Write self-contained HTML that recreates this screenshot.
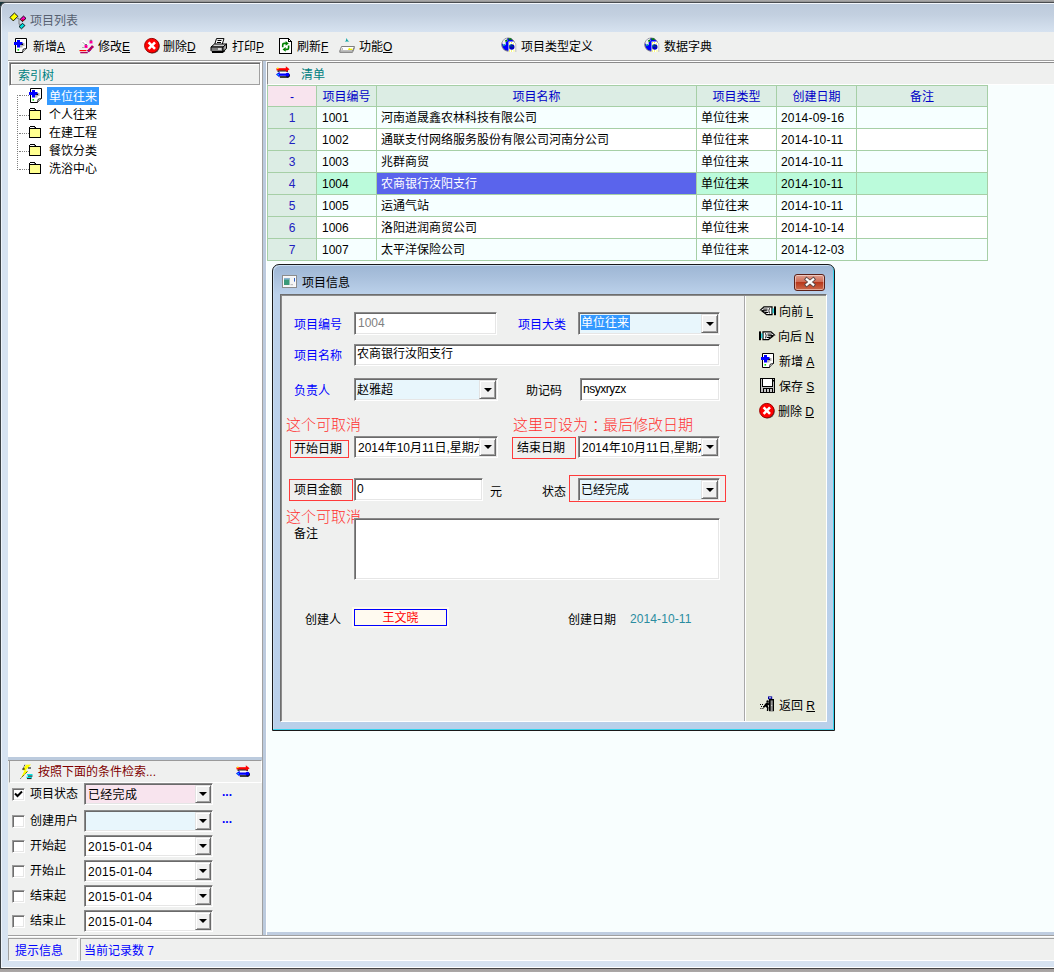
<!DOCTYPE html>
<html lang="zh-CN">
<head>
<meta charset="utf-8">
<title>项目列表</title>
<style>
*{box-sizing:border-box;margin:0;padding:0}
html,body{width:1054px;height:972px;overflow:hidden}
body{position:relative;background:#8d8d8d;font-family:"Liberation Sans","Noto Sans CJK SC","WenQuanYi Zen Hei",sans-serif;font-size:12px;line-height:14px;color:#000}
.a{position:absolute;white-space:nowrap}
svg{position:absolute;overflow:visible}
#topstrip{left:0;top:0;width:1054px;height:6px;background:linear-gradient(#adadad 0,#8e8e8e 2px,#17343a 2px,#17343a 6px)}
#botstrip{left:0;top:968px;width:1054px;height:4px;background:linear-gradient(#444 0,#444 1px,#a39f9e 1px,#aca8a7 100%)}
#win{left:0;top:2px;width:1070px;height:966px;border-left:1px solid #3d4246;border-top:1px solid #484b4e;border-radius:6px 0 0 0;background:linear-gradient(#f2f6fb 0,#f2f6fb 1px,#bccadb 1px,#c3d0e0 12px,#d3dfed 26px,#d7e3f1 30px,#d7e3f1 964px,#fff 964px);box-shadow:inset 1px 0 0 #eef4fb}
#client{left:8px;top:32px;width:1046px;height:929px;background:#eff0ef}
.tb{top:40px;height:14px}
.sunk{border:1px solid;border-color:#868686 #fff #fff #868686;box-shadow:inset 1px 1px 0 #646464}
.inp{background:#fff;border:1px solid;border-color:#8a8a8a #fff #fff #8a8a8a;box-shadow:inset 1px 1px 0 #6a6a6a, inset -1px -1px 0 #e6e6e6}
.ddb{background:#f0f0f0;border:1px solid;border-color:#e3e3e3 #696969 #696969 #e3e3e3;box-shadow:inset 1px 1px 0 #fff, inset -1px -1px 0 #a0a0a0}
.ddb:after{content:"";position:absolute;left:50%;top:50%;margin:-2px 0 0 -4px;border:4px solid transparent;border-top-color:#000;border-bottom:0;width:0;height:0}
.teal{color:#008080}
.blue{color:#0000ff}
.red{color:#ff3b3b}
.ann{font-size:15px;line-height:18px;color:#ff3030;font-weight:300}
.cb{width:13px;height:13px;background:#fff;border:1px solid;border-color:#9a9a9a #fff #fff #9a9a9a;box-shadow:inset 1px 1px 0 #6e6e6e, inset -1px -1px 0 #e6e6e6}
.g{border-collapse:collapse}
.cell{border-right:1px solid #a6cfa6;border-bottom:1px solid #a6cfa6;height:22px;line-height:21px;overflow:hidden}
.hd{background:#dcede4;color:#0000c8;text-align:center}
.rn{background:#dcede4;color:#2020c0;text-align:center}
.rbox{border:1px solid #ff3b3b;padding-left:4px}
</style>
</head>
<body>
<div class="a" id="topstrip"></div>
<div class="a" id="botstrip"></div>
<div class="a" id="win"></div>
<div class="a" style="left:30px;top:14px;color:#566070">项目列表</div>
<div class="a" id="client"></div>
<!-- toolbar -->
<div class="a tb" style="left:33px">新增<u>A</u></div>
<div class="a tb" style="left:98px">修改<u>E</u></div>
<div class="a tb" style="left:163px">删除<u>D</u></div>
<div class="a tb" style="left:232px">打印<u>P</u></div>
<div class="a tb" style="left:297px">刷新<u>F</u></div>
<div class="a tb" style="left:359px">功能<u>O</u></div>
<svg style="left:14px;top:38px" width="14" height="15" viewBox="0 0 14 15" ><path d="M1.5 .5H12.5V10.5L8.5 14.5H1.5Z" fill="#fff" stroke="#000"/><path d="M8.5 14.5L9.2 11.2L12.5 10.5" fill="#fff" stroke="#000" stroke-width=".9"/><path d="M6 5H10.5V8H8.5V9.5H6Z" fill="#b4b4b4"/><path d="M3 2H6V4H8.5V7H6V9.5H3V7H0V4H3Z" fill="#0000ff"/><rect x="7.5" y="5.8" width="1.5" height="1.2" fill="#000"/><rect x="3.5" y="11" width="1.6" height="1.6" fill="#00e000"/></svg>
<svg style="left:79px;top:39px" width="15" height="15" viewBox="0 0 15 15" ><path d="M2 3L4.5 .8L9 5.5L6.5 7.5Z" fill="#fff"/><path d="M3.5 3L7 6.5" stroke="#a0a0a0" stroke-width="1"/><rect x="5.5" y="6" width="3" height="3" fill="#ff00c0"/><rect x="6" y="5" width="2" height="1" fill="#707070"/><rect x="6.5" y="7" width="1" height="1" fill="#ff0000"/><rect x="10.5" y="1.5" width="3" height="3" fill="#ff00c0"/><rect x="11" y=".8" width="2" height="1" fill="#707070"/><rect x="11.5" y="2.5" width="1" height="1" fill="#ff0000"/><path d="M3 8.5H6" stroke="#b0b0b0" stroke-width="1"/><rect x=".5" y="11" width="7" height="1.2" fill="#ff0000"/><path d="M1.5 13.6H8.5" stroke="#ff0000" stroke-width="1.2"/><path d="M1.5 13.6H8.5" stroke="#6000c0" stroke-width="1.2" stroke-dasharray="1 1"/><path d="M9 12.5L14 7" stroke="#ff0000" stroke-width="2.6"/><path d="M9 12.5L14 7" stroke="#6000c0" stroke-width="2.6" stroke-dasharray="1 1"/></svg>
<svg style="left:144px;top:38px" width="16" height="16" viewBox="0 0 16 16" ><circle cx="8.5" cy="8.4" r="7.2" fill="#505050"/><circle cx="7.8" cy="7.6" r="7.2" fill="#ff0000" stroke="#a00000" stroke-width="1"/><path d="M4.6 4.4L11 10.8M11 4.4L4.6 10.8" stroke="#fff" stroke-width="2.6"/></svg>
<svg style="left:210px;top:38px" width="18" height="16" viewBox="0 0 18 16" ><path d="M4.5 7L6.5 .6H14L12 7Z" fill="#fff" stroke="#000"/><path d="M7.5 2.5H11.5M7 4.5H11" stroke="#000" stroke-width="1"/><path d="M1 9L4.5 6H16.5L13 9Z" fill="#d0d0d0" stroke="#000"/><path d="M1 9H13V13.5H2L1 12.5Z" fill="#808080" stroke="#000"/><path d="M13 9L16.5 6V10.5L13 13.5Z" fill="#a0a0a0" stroke="#000"/><path d="M8 11H11.5" stroke="#fff" stroke-width="1.4"/><path d="M2 14.5H12.5L15 12.5" fill="none" stroke="#000" stroke-width="1.2"/></svg>
<svg style="left:279px;top:38px" width="13" height="16" viewBox="0 0 13 16" ><path d="M.5 .5H9.5L12.5 3.5V15.5H.5Z" fill="#fff" stroke="#000" shape-rendering="crispEdges"/><path d="M9.5 .5V3.5H12.5" fill="none" stroke="#000" shape-rendering="crispEdges"/><path d="M3.7 9.2V6.8Q3.7 5.4 5.2 5.4H7" fill="none" stroke="#008000" stroke-width="1.6"/><path d="M6.6 3L9.8 5.4L6.6 7.8Z" fill="#008000"/><path d="M9.6 7.6V10Q9.6 11.4 8.1 11.4H6.3" fill="none" stroke="#008000" stroke-width="1.6"/><path d="M6.7 9L3.5 11.4L6.7 13.8Z" fill="#008000"/></svg>
<svg style="left:339px;top:38px" width="16" height="15" viewBox="0 0 16 15" ><path d="M7.5 0L8.8 2.4L10.4 3.6H5.8L7 2.4Z" fill="#00a0a0"/><path d="M2.5 8.5H15.5L13.5 13H.8Z" fill="#fff" stroke="#808080" stroke-width="1"/><path d="M.8 13V14.4H13.5L15.5 9.5" fill="none" stroke="#808080" stroke-width="1"/><path d="M9 12L10 9.8L11.5 10.8L13.5 10.5L13 12Z" fill="#f0f000"/><path d="M3.5 10.2L3 12" stroke="#a0a0a0"/></svg>
<svg style="left:501px;top:37px" width="16" height="16" viewBox="0 0 16 16" ><circle cx="7.3" cy="7.6" r="6.6" fill="#0000ff" stroke="#808080" stroke-width="1"/><path d="M1.2 6Q2 2.5 6 1.3L6.5 4L4.5 5.5L5 7.5L2.5 8.5Z" fill="#f0f0f0"/><path d="M4 3.2L6 2.6L6.2 4.4L4.6 5Z" fill="#008000"/><path d="M7 1.5L10 1.2L11 2.6L8 3.2Z" fill="#008000"/><path d="M2 7.5L4 7L4.5 8.5L2.5 9.2Z" fill="#00a0a0"/><path d="M7.5 4.5H12.5L14.8 6.8V15H7.5Z" fill="#fff"/><path d="M12.5 4.5L14.8 6.8V15" fill="none" stroke="#b0b0b0" stroke-width=".8"/><g fill="#f0f000"><rect x="8" y="5.2" width="1" height="1"/><rect x="10" y="5.2" width="1" height="1"/><rect x="8" y="13.5" width="1" height="1"/><rect x="10" y="13.5" width="1" height="1"/><rect x="12.5" y="13.5" width="1" height="1"/><rect x="8" y="7.5" width="1" height="1"/><rect x="8" y="11.5" width="1" height="1"/><rect x="12" y="6.5" width="1" height="1"/></g><circle cx="10.8" cy="10" r="2.7" fill="#0000c0"/><path d="M8.6 10A2.3 2.3 0 0 1 11 7.6" fill="none" stroke="#008080" stroke-width="1"/><path d="M10.5 9L12 9.3L11 10.3Z" fill="#00a000"/></svg>
<svg style="left:644px;top:37px" width="16" height="16" viewBox="0 0 16 16" ><circle cx="7.3" cy="7.6" r="6.6" fill="#0000ff" stroke="#808080" stroke-width="1"/><path d="M1.2 6Q2 2.5 6 1.3L6.5 4L4.5 5.5L5 7.5L2.5 8.5Z" fill="#f0f0f0"/><path d="M4 3.2L6 2.6L6.2 4.4L4.6 5Z" fill="#008000"/><path d="M7 1.5L10 1.2L11 2.6L8 3.2Z" fill="#008000"/><path d="M2 7.5L4 7L4.5 8.5L2.5 9.2Z" fill="#00a0a0"/><path d="M7.5 4.5H12.5L14.8 6.8V15H7.5Z" fill="#fff"/><path d="M12.5 4.5L14.8 6.8V15" fill="none" stroke="#b0b0b0" stroke-width=".8"/><g fill="#f0f000"><rect x="8" y="5.2" width="1" height="1"/><rect x="10" y="5.2" width="1" height="1"/><rect x="8" y="13.5" width="1" height="1"/><rect x="10" y="13.5" width="1" height="1"/><rect x="12.5" y="13.5" width="1" height="1"/><rect x="8" y="7.5" width="1" height="1"/><rect x="8" y="11.5" width="1" height="1"/><rect x="12" y="6.5" width="1" height="1"/></g><circle cx="10.8" cy="10" r="2.7" fill="#0000c0"/><path d="M8.6 10A2.3 2.3 0 0 1 11 7.6" fill="none" stroke="#008080" stroke-width="1"/><path d="M10.5 9L12 9.3L11 10.3Z" fill="#00a000"/></svg>
<svg style="left:9px;top:12px" width="18" height="18" viewBox="0 0 18 18" ><path d="M8 6.3H10V12.3H11.5" fill="none" stroke="#808080" stroke-width="1"/><path d="M5.4 1L8.9 4.3L4.3 8.9L.9 5.4Z" fill="#ffff00" stroke="#000" stroke-width=".9"/><path d="M14.5 4.1L17 6.4L13.4 9.6L11.1 7.3Z" fill="#ff00c0" stroke="#000" stroke-width=".9"/><path d="M13.9 7L15.2 8.2L13.8 9.3L12.7 8.2Z" fill="#c00000"/><path d="M13.6 11.3L15.9 13.6L12.5 16.8L10 14.5Z" fill="#00e0e0" stroke="#000" stroke-width=".9"/></svg>
<div class="a tb" style="left:521px">项目类型定义</div>
<div class="a tb" style="left:664px">数据字典</div>
<div class="a" style="left:8px;top:60px;width:1046px;height:1px;background:#a0a0a0"></div>
<div class="a" style="left:8px;top:61px;width:1046px;height:1px;background:#fff"></div>
<!-- left panel -->
<div class="a" style="left:8px;top:62px;width:254px;height:695px;background:#fff"></div>
<div class="a" style="left:262px;top:61px;width:1px;height:875px;background:#a0a0a0"></div>
<div class="a" style="left:9px;top:62px;width:252px;height:24px;background:#eff0ef;border:1px solid;border-color:#a0a0a0 #fff #fff #a0a0a0;box-shadow:inset 1px 1px 0 #696969, inset -1px -1px 0 #a0a0a0, inset 2px 2px 0 #fff"></div>
<div class="a teal" style="left:18px;top:69px">索引树</div>
<div class="a" style="left:17px;top:95px;width:0;height:75px;border-left:1px dotted #808080"></div>
<div class="a" style="left:19px;top:95px;width:10px;height:0;border-top:1px dotted #808080"></div>
<svg style="left:29px;top:88px" width="14" height="15" viewBox="0 0 14 15" ><path d="M1.5 .5H12.5V10.5L8.5 14.5H1.5Z" fill="#fff" stroke="#000"/><path d="M8.5 14.5L9.2 11.2L12.5 10.5" fill="#fff" stroke="#000" stroke-width=".9"/><path d="M6 5H10.5V8H8.5V9.5H6Z" fill="#b4b4b4"/><path d="M3 2H6V4H8.5V7H6V9.5H3V7H0V4H3Z" fill="#0000ff"/><rect x="7.5" y="5.8" width="1.5" height="1.2" fill="#000"/><rect x="3.5" y="11" width="1.6" height="1.6" fill="#00e000"/></svg>
<div class="a" style="left:47px;top:87px;width:52px;height:18px;background:#3399ff;color:#fff;line-height:20px;padding-left:2px">单位往来</div>
<div class="a" style="left:19px;top:115px;width:10px;height:0;border-top:1px dotted #808080"></div>
<svg style="left:29px;top:108px" width="12" height="12" viewBox="0 0 12 12" ><path d="M.5 11.5V1.5L1.5 .5H5.5L6.5 2.5H11.5V11.5Z" fill="#ffff90" stroke="#000" shape-rendering="crispEdges"/><path d="M1 2.5H6" stroke="#000" shape-rendering="crispEdges"/><rect x="1" y="1" width="4.5" height="1" fill="#fff"/></svg>
<div class="a" style="left:49px;top:108px">个人往来</div>
<div class="a" style="left:19px;top:133px;width:10px;height:0;border-top:1px dotted #808080"></div>
<svg style="left:29px;top:126px" width="12" height="12" viewBox="0 0 12 12" ><path d="M.5 11.5V1.5L1.5 .5H5.5L6.5 2.5H11.5V11.5Z" fill="#ffff90" stroke="#000" shape-rendering="crispEdges"/><path d="M1 2.5H6" stroke="#000" shape-rendering="crispEdges"/><rect x="1" y="1" width="4.5" height="1" fill="#fff"/></svg>
<div class="a" style="left:49px;top:126px">在建工程</div>
<div class="a" style="left:19px;top:151px;width:10px;height:0;border-top:1px dotted #808080"></div>
<svg style="left:29px;top:144px" width="12" height="12" viewBox="0 0 12 12" ><path d="M.5 11.5V1.5L1.5 .5H5.5L6.5 2.5H11.5V11.5Z" fill="#ffff90" stroke="#000" shape-rendering="crispEdges"/><path d="M1 2.5H6" stroke="#000" shape-rendering="crispEdges"/><rect x="1" y="1" width="4.5" height="1" fill="#fff"/></svg>
<div class="a" style="left:49px;top:144px">餐饮分类</div>
<div class="a" style="left:19px;top:169px;width:10px;height:0;border-top:1px dotted #808080"></div>
<svg style="left:29px;top:162px" width="12" height="12" viewBox="0 0 12 12" ><path d="M.5 11.5V1.5L1.5 .5H5.5L6.5 2.5H11.5V11.5Z" fill="#ffff90" stroke="#000" shape-rendering="crispEdges"/><path d="M1 2.5H6" stroke="#000" shape-rendering="crispEdges"/><rect x="1" y="1" width="4.5" height="1" fill="#fff"/></svg>
<div class="a" style="left:49px;top:162px">洗浴中心</div>
<div class="a" style="left:263px;top:61px;width:3px;height:875px;background:#bccbde"></div>
<div class="a" style="left:8px;top:757px;width:254px;height:3px;background:#bccbde"></div>
<div class="a" style="left:8px;top:760px;width:254px;height:175px;background:#eff0ef;border-top:1px solid #9a9a9a"></div>
<div class="a" style="left:9px;top:760px;width:253px;height:23px;border:1px solid;border-color:#9a9a9a #fff #fff #9a9a9a"></div>
<svg style="left:20px;top:764px" width="13" height="15" viewBox="0 0 13 15" ><path d="M11 .5L5.5 6.5L8 7L.8 14.3L4.5 6.5L2.5 6.2L6 .8Z" fill="#ffff00"/><path d="M.6 14.5L8 7" stroke="#000" stroke-width=".9" stroke-dasharray="1 1"/><path d="M4.8 .8L2.6 6" stroke="#000" stroke-width=".9" stroke-dasharray="1 1"/><path d="M8 4H11M2.5 5H4.8" stroke="#000" stroke-width="1"/><rect x="7" y="10" width="5.5" height="1.6" fill="#00e8e8"/><rect x="6.5" y="12.6" width="5.5" height="1.6" fill="#00e8e8"/><path d="M8 12.1H12.5M7 14.6H11.5" stroke="#000" stroke-width=".9"/></svg>
<svg style="left:236px;top:765px" width="14" height="12" viewBox="0 0 14 12" ><path d="M1.5 5H12M4 11H12.5" stroke="#000" stroke-width="1.6"/><circle cx="12" cy="9.4" r="2" fill="#000"/><rect x=".5" y="2.2" width="10" height="2.2" fill="#ff0000"/><path d="M9.8 .2L13.6 3.3L9.8 6Z" fill="#ff0000"/><rect x="1" y="1.6" width="1.5" height="1.5" fill="#ffe000"/><rect x="3.2" y="5.6" width="7" height="1.8" fill="#fff"/><path d="M3.6 5.8L0 8.6L3.6 11.4Z" fill="#0000ff"/><rect x="3" y="7.5" width="8.5" height="2.3" fill="#0000ff"/><circle cx="11.5" cy="8.7" r="1.9" fill="#0000ff"/><rect x="1.5" y="8" width="1.4" height="1.4" fill="#00d8ff"/></svg>
<div class="a" style="left:38px;top:765px;color:#800000">按照下面的条件检索...</div>
<div class="a cb" style="left:12px;top:788px"></div>
<svg style="left:14px;top:790px" width="9" height="9" viewBox="0 0 9 9"><path d="M1 3.5 L3.5 6 L8 1.5" fill="none" stroke="#000" stroke-width="2"/></svg>
<div class="a" style="left:30px;top:787px">项目状态</div>
<div class="a inp" style="left:84px;top:783px;width:129px;height:22px;background:#f8e4ee"></div>
<div class="a" style="left:88px;top:788px;letter-spacing:.3px">已经完成</div>
<div class="a ddb" style="left:195px;top:785px;width:16px;height:18px"></div>
<div class="a" style="left:222px;top:785px;color:#0000ff;font-weight:bold">...</div>
<div class="a cb" style="left:12px;top:815px"></div>
<div class="a" style="left:30px;top:814px">创建用户</div>
<div class="a inp" style="left:84px;top:810px;width:129px;height:22px;background:#e8f6fc"></div>
<div class="a" style="left:88px;top:815px;letter-spacing:.3px"></div>
<div class="a ddb" style="left:195px;top:812px;width:16px;height:18px"></div>
<div class="a" style="left:222px;top:812px;color:#0000ff;font-weight:bold">...</div>
<div class="a cb" style="left:12px;top:840px"></div>
<div class="a" style="left:30px;top:839px">开始起</div>
<div class="a inp" style="left:84px;top:835px;width:129px;height:22px;background:#fff"></div>
<div class="a" style="left:88px;top:840px;letter-spacing:.3px">2015-01-04</div>
<div class="a ddb" style="left:195px;top:837px;width:16px;height:18px"></div>
<div class="a cb" style="left:12px;top:865px"></div>
<div class="a" style="left:30px;top:864px">开始止</div>
<div class="a inp" style="left:84px;top:860px;width:129px;height:22px;background:#fff"></div>
<div class="a" style="left:88px;top:865px;letter-spacing:.3px">2015-01-04</div>
<div class="a ddb" style="left:195px;top:862px;width:16px;height:18px"></div>
<div class="a cb" style="left:12px;top:890px"></div>
<div class="a" style="left:30px;top:889px">结束起</div>
<div class="a inp" style="left:84px;top:885px;width:129px;height:22px;background:#fff"></div>
<div class="a" style="left:88px;top:890px;letter-spacing:.3px">2015-01-04</div>
<div class="a ddb" style="left:195px;top:887px;width:16px;height:18px"></div>
<div class="a cb" style="left:12px;top:915px"></div>
<div class="a" style="left:30px;top:914px">结束止</div>
<div class="a inp" style="left:84px;top:910px;width:129px;height:22px;background:#fff"></div>
<div class="a" style="left:88px;top:915px;letter-spacing:.3px">2015-01-04</div>
<div class="a ddb" style="left:195px;top:912px;width:16px;height:18px"></div>
<div class="a" style="left:8px;top:935px;width:1046px;height:1px;background:#a0a0a0"></div>
<div class="a" style="left:8px;top:936px;width:1046px;height:1px;background:#fff"></div>
<!-- right panel -->
<div class="a" style="left:266px;top:62px;width:788px;height:873px;background:#f8fefe;border-left:1px solid #fff"></div>
<div class="a" style="left:267px;top:62px;width:787px;height:23px;background:#eff0ef;border-top:1px solid #8a8a8a;border-left:1px solid #8a8a8a;border-bottom:1px solid #fff"></div>
<svg style="left:276px;top:66px" width="14" height="12" viewBox="0 0 14 12" ><path d="M1.5 5H12M4 11H12.5" stroke="#000" stroke-width="1.6"/><circle cx="12" cy="9.4" r="2" fill="#000"/><rect x=".5" y="2.2" width="10" height="2.2" fill="#ff0000"/><path d="M9.8 .2L13.6 3.3L9.8 6Z" fill="#ff0000"/><rect x="1" y="1.6" width="1.5" height="1.5" fill="#ffe000"/><rect x="3.2" y="5.6" width="7" height="1.8" fill="#fff"/><path d="M3.6 5.8L0 8.6L3.6 11.4Z" fill="#0000ff"/><rect x="3" y="7.5" width="8.5" height="2.3" fill="#0000ff"/><circle cx="11.5" cy="8.7" r="1.9" fill="#0000ff"/><rect x="1.5" y="8" width="1.4" height="1.4" fill="#00d8ff"/></svg>
<div class="a teal" style="left:301px;top:68px">清单</div>
<div class="a" style="left:267px;top:932px;width:787px;height:3px;background:#bfcde0"></div>
<div class="a" style="left:267px;top:85px;width:721px;height:176px;background:#a6cfa6"></div>
<div class="a" style="left:268px;top:86px;width:48px;height:20px;line-height:22px;background:#f8e4ee;color:#0000c8;text-align:center">-</div>
<div class="a" style="left:317px;top:86px;width:59px;height:20px;line-height:22px;background:#dcede4;color:#0000c8;text-align:center">项目编号</div>
<div class="a" style="left:377px;top:86px;width:319px;height:20px;line-height:22px;background:#dcede4;color:#0000c8;text-align:center">项目名称</div>
<div class="a" style="left:697px;top:86px;width:79px;height:20px;line-height:22px;background:#dcede4;color:#0000c8;text-align:center">项目类型</div>
<div class="a" style="left:777px;top:86px;width:79px;height:20px;line-height:22px;background:#dcede4;color:#0000c8;text-align:center">创建日期</div>
<div class="a" style="left:857px;top:86px;width:130px;height:20px;line-height:22px;background:#dcede4;color:#0000c8;text-align:center">备注</div>
<div class="a" style="left:268px;top:107px;width:48px;height:21px;line-height:23px;background:#dcede4;color:#2020c0;text-align:center">1</div>
<div class="a" style="left:317px;top:107px;width:59px;height:21px;line-height:23px;background:#f6ffff;padding-left:5px">1001</div>
<div class="a" style="left:377px;top:107px;width:319px;height:21px;line-height:23px;background:#f6ffff;padding-left:4px">河南道晟鑫农林科技有限公司</div>
<div class="a" style="left:697px;top:107px;width:79px;height:21px;line-height:23px;background:#f6ffff;padding-left:4px">单位往来</div>
<div class="a" style="left:777px;top:107px;width:79px;height:21px;line-height:23px;background:#f6ffff;padding-left:4px;letter-spacing:.2px">2014-09-16</div>
<div class="a" style="left:857px;top:107px;width:130px;height:21px;line-height:23px;background:#f6ffff;padding-left:4px"></div>
<div class="a" style="left:268px;top:129px;width:48px;height:21px;line-height:23px;background:#dcede4;color:#2020c0;text-align:center">2</div>
<div class="a" style="left:317px;top:129px;width:59px;height:21px;line-height:23px;background:#fff;padding-left:5px">1002</div>
<div class="a" style="left:377px;top:129px;width:319px;height:21px;line-height:23px;background:#fff;padding-left:4px">通联支付网络服务股份有限公司河南分公司</div>
<div class="a" style="left:697px;top:129px;width:79px;height:21px;line-height:23px;background:#fff;padding-left:4px">单位往来</div>
<div class="a" style="left:777px;top:129px;width:79px;height:21px;line-height:23px;background:#fff;padding-left:4px;letter-spacing:.2px">2014-10-11</div>
<div class="a" style="left:857px;top:129px;width:130px;height:21px;line-height:23px;background:#fff;padding-left:4px"></div>
<div class="a" style="left:268px;top:151px;width:48px;height:21px;line-height:23px;background:#dcede4;color:#2020c0;text-align:center">3</div>
<div class="a" style="left:317px;top:151px;width:59px;height:21px;line-height:23px;background:#f6ffff;padding-left:5px">1003</div>
<div class="a" style="left:377px;top:151px;width:319px;height:21px;line-height:23px;background:#f6ffff;padding-left:4px">兆群商贸</div>
<div class="a" style="left:697px;top:151px;width:79px;height:21px;line-height:23px;background:#f6ffff;padding-left:4px">单位往来</div>
<div class="a" style="left:777px;top:151px;width:79px;height:21px;line-height:23px;background:#f6ffff;padding-left:4px;letter-spacing:.2px">2014-10-11</div>
<div class="a" style="left:857px;top:151px;width:130px;height:21px;line-height:23px;background:#f6ffff;padding-left:4px"></div>
<div class="a" style="left:268px;top:173px;width:48px;height:21px;line-height:23px;background:#dcede4;color:#2020c0;text-align:center">4</div>
<div class="a" style="left:317px;top:173px;width:59px;height:21px;line-height:23px;background:#bbfbdb;padding-left:5px">1004</div>
<div class="a" style="left:377px;top:173px;width:319px;height:21px;line-height:23px;background:#5a64ec;color:#fff;padding-left:4px">农商银行汝阳支行</div>
<div class="a" style="left:697px;top:173px;width:79px;height:21px;line-height:23px;background:#bbfbdb;padding-left:4px">单位往来</div>
<div class="a" style="left:777px;top:173px;width:79px;height:21px;line-height:23px;background:#bbfbdb;padding-left:4px;letter-spacing:.2px">2014-10-11</div>
<div class="a" style="left:857px;top:173px;width:130px;height:21px;line-height:23px;background:#bbfbdb;padding-left:4px"></div>
<div class="a" style="left:268px;top:195px;width:48px;height:21px;line-height:23px;background:#dcede4;color:#2020c0;text-align:center">5</div>
<div class="a" style="left:317px;top:195px;width:59px;height:21px;line-height:23px;background:#f6ffff;padding-left:5px">1005</div>
<div class="a" style="left:377px;top:195px;width:319px;height:21px;line-height:23px;background:#f6ffff;padding-left:4px">运通气站</div>
<div class="a" style="left:697px;top:195px;width:79px;height:21px;line-height:23px;background:#f6ffff;padding-left:4px">单位往来</div>
<div class="a" style="left:777px;top:195px;width:79px;height:21px;line-height:23px;background:#f6ffff;padding-left:4px;letter-spacing:.2px">2014-10-11</div>
<div class="a" style="left:857px;top:195px;width:130px;height:21px;line-height:23px;background:#f6ffff;padding-left:4px"></div>
<div class="a" style="left:268px;top:217px;width:48px;height:21px;line-height:23px;background:#dcede4;color:#2020c0;text-align:center">6</div>
<div class="a" style="left:317px;top:217px;width:59px;height:21px;line-height:23px;background:#fff;padding-left:5px">1006</div>
<div class="a" style="left:377px;top:217px;width:319px;height:21px;line-height:23px;background:#fff;padding-left:4px">洛阳进润商贸公司</div>
<div class="a" style="left:697px;top:217px;width:79px;height:21px;line-height:23px;background:#fff;padding-left:4px">单位往来</div>
<div class="a" style="left:777px;top:217px;width:79px;height:21px;line-height:23px;background:#fff;padding-left:4px;letter-spacing:.2px">2014-10-14</div>
<div class="a" style="left:857px;top:217px;width:130px;height:21px;line-height:23px;background:#fff;padding-left:4px"></div>
<div class="a" style="left:268px;top:239px;width:48px;height:21px;line-height:23px;background:#dcede4;color:#2020c0;text-align:center">7</div>
<div class="a" style="left:317px;top:239px;width:59px;height:21px;line-height:23px;background:#f6ffff;padding-left:5px">1007</div>
<div class="a" style="left:377px;top:239px;width:319px;height:21px;line-height:23px;background:#f6ffff;padding-left:4px">太平洋保险公司</div>
<div class="a" style="left:697px;top:239px;width:79px;height:21px;line-height:23px;background:#f6ffff;padding-left:4px">单位往来</div>
<div class="a" style="left:777px;top:239px;width:79px;height:21px;line-height:23px;background:#f6ffff;padding-left:4px;letter-spacing:.2px">2014-12-03</div>
<div class="a" style="left:857px;top:239px;width:130px;height:21px;line-height:23px;background:#f6ffff;padding-left:4px"></div>
<!-- status -->
<div class="a" style="left:8px;top:938px;width:70px;height:23px;border:1px solid;border-color:#a0a0a0 #fff #fff #a0a0a0"></div>
<div class="a" style="left:80px;top:938px;width:990px;height:23px;border:1px solid;border-color:#a0a0a0 #fff #fff #a0a0a0"></div>
<div class="a blue" style="left:15px;top:944px">提示信息</div>
<div class="a blue" style="left:84px;top:944px">当前记录数 7</div>
<!-- dialog -->
<div class="a" style="left:272px;top:264px;width:563px;height:467px;border:1px solid #1a1a1a;border-radius:7px 7px 0 0;background:linear-gradient(#9db6d4 0,#a9c0dc 12px,#bcd2eb 30px,#b9d0ea 100%);box-shadow:inset -1px -1px 0 #35d3ee, inset 1px 1px 0 #c8dcf0"></div>
<svg style="left:282px;top:275px" width="15" height="13" viewBox="0 0 15 13" ><rect x=".5" y=".5" width="14" height="12" fill="#fff" stroke="#8c8c8c" stroke-width="1"/><rect x="1.5" y="1.5" width="12" height="10" fill="#f4f4f4"/><rect x="2" y="3" width="5.5" height="7" fill="#3a9a78"/><rect x="2" y="3" width="5.5" height="1.6" fill="#88b4d4"/><rect x="8.5" y="9" width="2.5" height="1.2" fill="#c0c0c0"/><rect x="12" y="3" width="1" height="3.6" fill="#3060c0"/></svg>
<div class="a" style="left:302px;top:276px">项目信息</div>
<div class="a" style="left:794px;top:274px;width:31px;height:17px;border:1px solid #5b2018;border-radius:3px;background:linear-gradient(#e0a090 0,#cf6d57 45%,#b8381c 50%,#cc6a4c 100%);box-shadow:inset 0 0 0 1px rgba(255,255,255,.45)"></div>
<svg style="left:804px;top:277px" width="12" height="10" viewBox="0 0 12 10"><path d="M2.6 2.2 L9.4 7.8 M9.4 2.2 L2.6 7.8" stroke="#5e4a48" stroke-width="3.8" stroke-linecap="square"/><path d="M2.8 2.4 L9.2 7.6 M9.2 2.4 L2.8 7.6" stroke="#fff" stroke-width="2.2" stroke-linecap="square"/></svg>
<div class="a" style="left:280px;top:294px;width:547px;height:428px;background:#eff0ef;border:1px solid;border-color:#6e6e6e #fff #fff #6e6e6e;box-shadow:inset 1px 1px 0 #8c8c8c"></div>
<div class="a" style="left:744px;top:296px;width:1px;height:425px;background:#a8a8a8"></div>
<div class="a" style="left:745px;top:296px;width:1px;height:425px;background:#fff"></div>
<div class="a" style="left:746px;top:296px;width:80px;height:425px;background:#e6e9da"></div>
<div class="a blue" style="left:294px;top:318px">项目编号</div>
<div class="a blue" style="left:294px;top:349px">项目名称</div>
<div class="a blue" style="left:294px;top:384px">负责人</div>
<div class="a blue" style="left:518px;top:318px">项目大类</div>
<div class="a " style="left:526px;top:384px">助记码</div>
<div class="a " style="left:542px;top:485px">状态</div>
<div class="a " style="left:490px;top:485px">元</div>
<div class="a " style="left:294px;top:527px">备注</div>
<div class="a " style="left:305px;top:613px">创建人</div>
<div class="a " style="left:568px;top:613px">创建日期</div>
<div class="a" style="left:630px;top:612px;color:#2a8ca0;letter-spacing:.1px">2014-10-11</div>
<div class="a inp" style="left:354px;top:312px;width:143px;height:23px;background:#fff"></div>
<div class="a" style="left:358px;top:316px;color:#808080">1004</div>
<div class="a inp" style="left:578px;top:312px;width:142px;height:23px;background:#e8f6fc"></div>
<div class="a" style="left:581px;top:315px;width:49px;height:15px;background:#3399ff;color:#fff;line-height:16px">单位往来</div>
<div class="a ddb" style="left:701px;top:314px;width:17px;height:19px"></div>
<div class="a inp" style="left:354px;top:344px;width:366px;height:22px;background:#fff"></div>
<div class="a" style="left:357px;top:347px">农商银行汝阳支行</div>
<div class="a inp" style="left:354px;top:378px;width:144px;height:23px;background:#e8f6fc"></div>
<div class="a" style="left:357px;top:383px">赵雅超</div>
<div class="a ddb" style="left:479px;top:380px;width:17px;height:19px"></div>
<div class="a inp" style="left:580px;top:378px;width:140px;height:23px;background:#fff"></div>
<div class="a" style="left:583px;top:382px;letter-spacing:-.5px">nsyxryzx</div>
<div class="a ann" style="left:286px;top:416px">这个可取消</div>
<div class="a ann" style="left:513px;top:416px">这里可设为<span style="position:relative;left:4px">：</span>最后修改日期</div>
<div class="a ann" style="left:286px;top:508px">这个可取消</div>
<div class="a rbox" style="left:290px;top:440px;width:59px;height:18px;line-height:17px;padding-left:3px">开始日期</div>
<div class="a inp" style="left:354px;top:436px;width:144px;height:22px;background:#fff"></div>
<div class="a" style="left:358px;top:441px;width:122px;overflow:hidden">2014年10月11日,星期六</div>
<div class="a ddb" style="left:479px;top:438px;width:17px;height:18px"></div>
<div class="a rbox" style="left:512px;top:437px;width:64px;height:22px;line-height:21px">结束日期</div>
<div class="a inp" style="left:578px;top:436px;width:142px;height:22px;background:#fff"></div>
<div class="a" style="left:582px;top:441px;width:119px;overflow:hidden">2014年10月11日,星期六</div>
<div class="a ddb" style="left:701px;top:438px;width:17px;height:18px"></div>
<div class="a rbox" style="left:289px;top:479px;width:64px;height:22px;line-height:21px">项目金额</div>
<div class="a inp" style="left:354px;top:478px;width:129px;height:23px;background:#fff"></div>
<div class="a" style="left:357px;top:482px">0</div>
<div class="a" style="left:569px;top:475px;width:157px;height:27px;border:1px solid #ff3b3b"></div>
<div class="a inp" style="left:578px;top:478px;width:142px;height:23px;background:#e8f6fc"></div>
<div class="a" style="left:581px;top:483px">已经完成</div>
<div class="a ddb" style="left:701px;top:480px;width:17px;height:19px"></div>
<div class="a inp" style="left:354px;top:518px;width:366px;height:62px;background:#fff"></div>
<div class="a" style="left:352px;top:607px;width:97px;height:21px;background:#fffaf0"></div>
<div class="a" style="left:354px;top:609px;width:93px;height:17px;border:1px solid #0000ff;color:#ff0000;text-align:center;line-height:17px">王文晓</div>
<svg style="left:760px;top:306px" width="16" height="10" viewBox="0 0 16 10" ><path d="M.6 3.9L4 .9H12V8.6H6.6L2.4 5.4L4.2 4.8Z" fill="#fff" stroke="#000" stroke-width="1.2"/><path d="M3.2 3.1H7.6M4.4 4.8H7.4M4.6 6.5H8.2" stroke="#000" stroke-width="1"/><path d="M9.5 2.2Q8.2 4.6 9.5 7.4" fill="none" stroke="#000" stroke-width=".9"/><rect x="12.6" y="2.4" width="1.2" height="4.8" fill="#00d0e0"/><rect x="14" y=".4" width="2" height="8.8" fill="#000"/></svg>
<svg style="left:759px;top:331px" width="16" height="10" viewBox="0 0 16 10" ><path d="M15.4 3.9L12 .9H4V8.6H9.4L13.6 5.4L11.8 4.8Z" fill="#fff" stroke="#000" stroke-width="1.2"/><path d="M12.8 3.1H8.4M11.6 4.8H8.6M11.4 6.5H7.8" stroke="#000" stroke-width="1"/><path d="M6.5 2.2Q7.8 4.6 6.5 7.4" fill="none" stroke="#000" stroke-width=".9"/><rect x="2.2" y="2.4" width="1.2" height="4.8" fill="#00d0e0"/><rect x="0" y=".4" width="2" height="8.8" fill="#000"/></svg>
<svg style="left:761px;top:353px" width="14" height="15" viewBox="0 0 14 15" ><path d="M1.5 .5H12.5V10.5L8.5 14.5H1.5Z" fill="#fff" stroke="#000"/><path d="M8.5 14.5L9.2 11.2L12.5 10.5" fill="#fff" stroke="#000" stroke-width=".9"/><path d="M6 5H10.5V8H8.5V9.5H6Z" fill="#b4b4b4"/><path d="M3 2H6V4H8.5V7H6V9.5H3V7H0V4H3Z" fill="#0000ff"/><rect x="7.5" y="5.8" width="1.5" height="1.2" fill="#000"/><rect x="3.5" y="11" width="1.6" height="1.6" fill="#00e000"/></svg>
<svg style="left:760px;top:378px" width="15" height="15" viewBox="0 0 15 15" ><rect x=".5" y=".5" width="14" height="14" fill="#c0c0c0" stroke="#000" shape-rendering="crispEdges"/><rect x="3" y="1" width="9" height="7" fill="#fff"/><path d="M2.5 1V8.5H12.5V1" fill="none" stroke="#000" stroke-width="1" shape-rendering="crispEdges"/><rect x="13" y="2" width="1" height="1.5" fill="#000"/><rect x="3.5" y="10.5" width="9" height="4" fill="#c8c8c8" stroke="#000" stroke-width="1" shape-rendering="crispEdges"/><path d="M6.5 11V14M9.5 11V14" stroke="#000" stroke-width="1" shape-rendering="crispEdges"/></svg>
<svg style="left:759px;top:403px" width="16" height="16" viewBox="0 0 16 16" ><circle cx="8.5" cy="8.4" r="7.2" fill="#505050"/><circle cx="7.8" cy="7.6" r="7.2" fill="#ff0000" stroke="#a00000" stroke-width="1"/><path d="M4.6 4.4L11 10.8M11 4.4L4.6 10.8" stroke="#fff" stroke-width="2.6"/></svg>
<svg style="left:760px;top:696px" width="14" height="16" viewBox="0 0 14 16" ><rect x="8.5" y=".9" width="3.2" height="1.9" fill="#fff" stroke="#0000a0" stroke-width="1"/><rect x="9" y="3" width="5" height="12.2" fill="#000"/><rect x="10.6" y="4.4" width="2.2" height="10.8" fill="#909090"/><rect x="11.2" y="9" width="1" height="1" fill="#e0e0e0"/><circle cx="7.6" cy="5.4" r="1.2" fill="#000"/><path d="M8.8 6.4L9 9L7.6 9.4L8.6 11.5L8.2 15H6.8L7 12L5.2 10.4L4 12L3 11.2L5 8L6.6 6.6Z" fill="#000"/><path d="M0 8.5H3.4M1 10.5H4M.4 12.5H3.4" stroke="#000" stroke-width="1" stroke-dasharray="1 1"/></svg>
<div class="a" style="left:779px;top:305px">向前 <u>L</u></div>
<div class="a" style="left:778px;top:330px">向后 <u>N</u></div>
<div class="a" style="left:779px;top:355px">新增 <u>A</u></div>
<div class="a" style="left:779px;top:380px">保存 <u>S</u></div>
<div class="a" style="left:778px;top:405px">删除 <u>D</u></div>
<div class="a" style="left:779px;top:699px">返回 <u>R</u></div>
</body>
</html>
